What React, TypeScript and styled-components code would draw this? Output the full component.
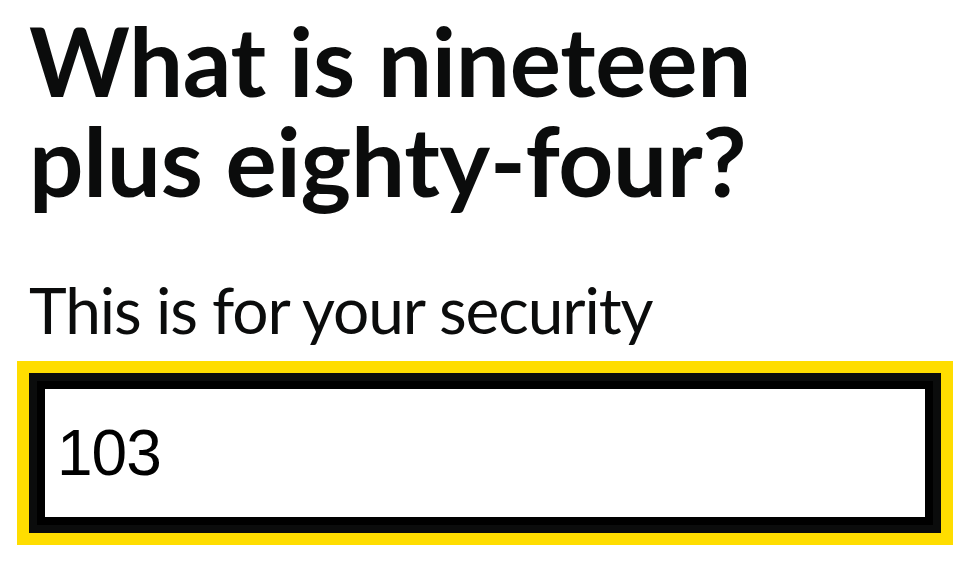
import styled, {createGlobalStyle} from 'styled-components';

const GlobalStyle = createGlobalStyle`
    html, body {
        margin: 0;
        padding: 0;
        background: #ffffff;
    }
    body {
        font-family: Lato, "Liberation Sans", Arial, sans-serif;
        color: #0b0c0c;
    }
`;

const Page = styled.main`
    box-sizing: border-box;
    min-height: 571px;
    padding: 10px 36px 38px 29px;
`;

const Question = styled.div`
    display: flex;
    flex-direction: column;
`;

const Heading = styled.h1`
    margin: 0 0 60px;
    font-family: Lato, "Liberation Sans", Arial, sans-serif;
    font-size: 96px;
    line-height: 100px;
    font-weight: 700;
    letter-spacing: -0.3px;
    color: #0b0c0c;
`;

const Hint = styled.div`
    margin: 0 0 23px;
    font-size: 64px;
    line-height: 80px;
    font-weight: 400;
    letter-spacing: -1.1px;
    color: #0b0c0c;
`;

const AnswerInput = styled.input`
    box-sizing: border-box;
    width: 912px;
    height: 160px;
    margin: 0;
    padding: 20px;
    border: 8px solid #0b0c0c;
    border-radius: 0;
    outline: 12px solid #ffdd00;
    outline-offset: 0;
    box-shadow: inset 0 0 0 8px #000000;
    font-family: "Liberation Sans", Arial, sans-serif;
    font-size: 64px;
    line-height: 1.25;
    letter-spacing: -1px;
    color: #000000;
    background: #ffffff;
    appearance: none;
`;

export default function App() {
    return <>
        <GlobalStyle/>
        <Page>
            <Question>
                <Heading>What is nineteen<br/>plus eighty-four?</Heading>
                <Hint>This is for your security</Hint>
                <AnswerInput type="text" defaultValue="103" aria-label="Answer"/>
            </Question>
        </Page>
    </>;
}
